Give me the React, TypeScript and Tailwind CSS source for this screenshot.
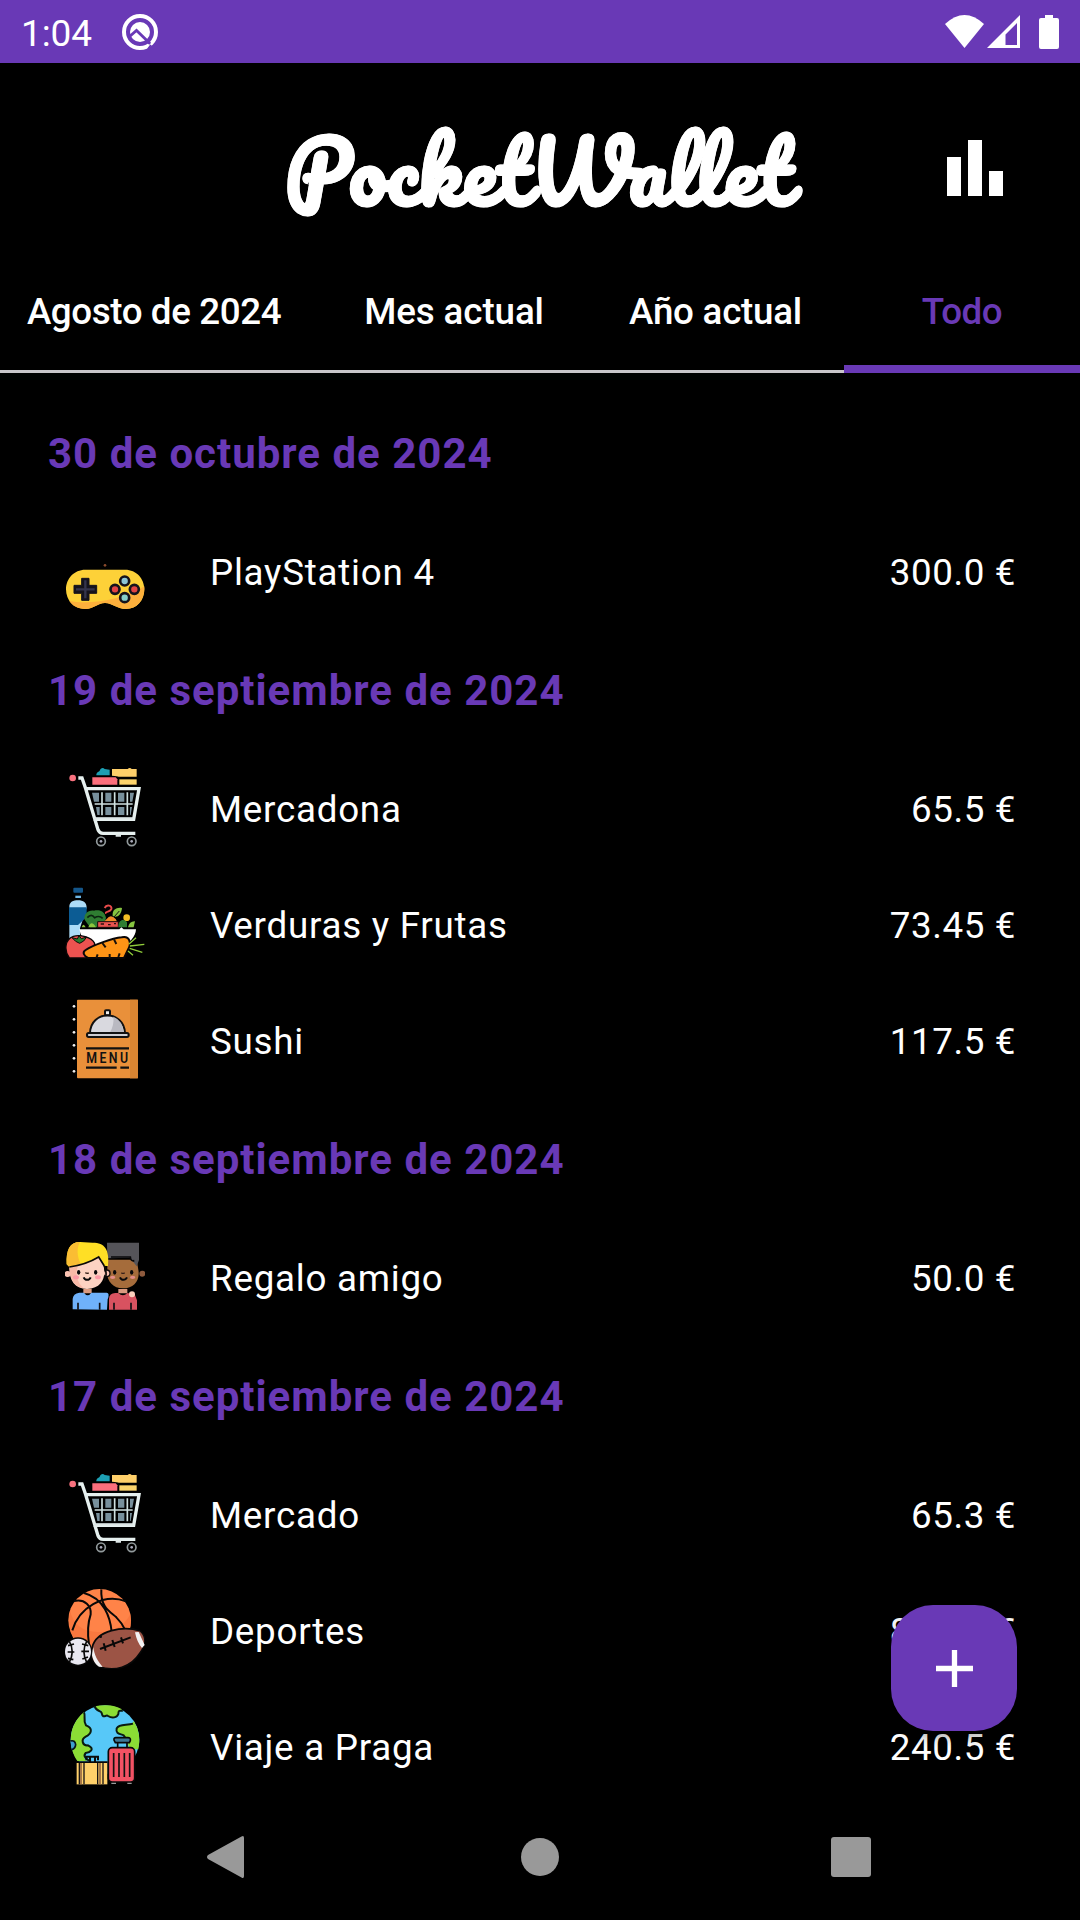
import React from "react";

type IconName = "gamepad" | "cart" | "veggies" | "menu" | "friends" | "sports" | "travel";

const ICON_VIEW: Record<IconName, string> = {
  gamepad: "75 -29 240 240",
  cart: "44 51 240 240",
  veggies: "45 24 240 240",
  menu: "45 372 240 240",
  friends: "45 19 240 240",
  sports: "45 27 240 240",
  travel: "45 375 240 240",
};

function Gamepad() {
  return (
    <>
      <circle cx="195" cy="77" r="4" fill="#8a4a2c" />
      <path d="M136 90H255C290 90 313 117 313 149C313 183 290 208 258 208C230 208 218 190 195 190C172 190 162 208 136 208C102 208 78 183 78 149C78 117 102 90 136 90Z" fill="#fdd138" />
      <path d="M313 140C316 180 292 208 258 208C230 208 218 190 195 190C172 190 162 208 136 208C112 208 96 197 88 184C150 196 250 180 313 140Z" fill="#fdb03c" />
      <path d="M125 116H147V137H170V161H147V182H125V161H102V137H125Z" fill="#15131c" stroke="#15131c" strokeWidth="3" strokeLinejoin="round" />
      <path d="M136 122V176M108 149H164" stroke="#34344c" strokeWidth="7" />
      <g stroke="#15131c" strokeWidth="8">
        <circle cx="254" cy="124" r="13.500" fill="#8cc5d6" />
        <circle cx="254" cy="174" r="13.500" fill="#86cfc9" />
        <circle cx="225" cy="149" r="13.500" fill="#e04343" />
        <circle cx="283" cy="149" r="13.500" fill="#e04343" />
      </g>
    </>
  );
}

function Cart() {
  return (
    <>
      <path d="M138 76C138 66 145 66 148 62C151 52 159 52 163 57L178 59V76Z" fill="#1d9fb3" />
      <path d="M185 57H232Q238 51 244 57H259V80H205Q202 78 185 77Z" fill="#ffd06a" />
      <rect x="207" y="88" width="52" height="16" fill="#fbd36b" />
      <path d="M126 82H196L201 88V104H126Z" fill="#fb6f7c" />
      <circle cx="67" cy="84" r="10" fill="#f9727f" />
      <g fill="#78909c">
        <path d="M125 128H146V155H131ZM165 128H183V155H165ZM203 128H222V155H203ZM239 128H251L246 155H239Z" />
        <path d="M137 171H148V195H141ZM165 171H183V195H165ZM203 171H222V195H203ZM239 171H245L241 195H239Z" />
      </g>
      <path d="M155 127V196M193 127V196M231 127V196M133 162H247" stroke="#cfe0e0" strokeWidth="5" fill="none" />
      <path d="M84 84H95L106 116H266L250 208H129M106 116L143 239Q147 250 158 250H255" stroke="#e6f0ef" strokeWidth="10" fill="none" />
      <path d="M132 205H248M196 257H212" stroke="#dde6e6" strokeWidth="7" />
      <g stroke="#929a9c" strokeWidth="5" fill="none">
        <circle cx="152" cy="274" r="13" />
        <circle cx="244" cy="274" r="13" />
      </g>
      <circle cx="152" cy="274" r="4" fill="#aab" />
      <circle cx="244" cy="274" r="4" fill="#aab" />
    </>
  );
}

function Veggies() {
  return (
    <>
      <rect x="70" y="38" width="29" height="15" rx="3" fill="#14568a" />
      <path d="M76 62H93V69H76Z" fill="#6fb6e4" />
      <path d="M58 96C58 80 70 76 84 76C100 76 110 82 110 98L90 160V190H58Z" fill="#acdcf8" />
      <path d="M57 97H110V126L84 150H57Z" fill="#0c5c94" />
      <path d="M104 134C100 118 115 104 132 107C145 103 162 108 166 122C175 138 150 144 142 157H120Z" fill="#2f7d32" />
      <path d="M112 128Q124 114 134 128Q148 120 158 130" stroke="#0b2410" strokeWidth="5" fill="none" />
      <path d="M115 157Q124 132 138 157M95 157Q100 142 107 157" fill="#8dc63f" />
      <path d="M164 99C170 87 187 91 184 102C181 112 165 108 168 116" stroke="#e94b4b" strokeWidth="6" fill="none" />
      <path d="M188 122C186 104 200 96 216 99C214 119 202 129 190 124Z" fill="#86c440" />
      <path d="M192 126L208 108" stroke="#111" strokeWidth="3" />
      <path d="M170 132Q182 116 197 132L202 142H160Z" fill="#f38a2a" />
      <circle cx="230" cy="128" r="10" fill="#f4bd25" />
      <path d="M143 140H205V157H143Z" fill="#e9534f" stroke="#170a0a" strokeWidth="3" />
      <path d="M152 147H162M174 149H182M192 146H198" stroke="#281010" strokeWidth="4" />
      <path d="M205 157C204 134 222 129 231 142V157Z" fill="#2f7d32" />
      <path d="M234 157Q238 138 255 139L251 157Z" fill="#86c440" />
      <path d="M88 163H208L214 157L221 163H258C257 184 240 207 210 214H126Q91 190 88 163Z" fill="#fff" />
      <path d="M70 184C45 193 41 225 58 249H127L134 205C124 186 90 178 70 184Z" fill="#ed5350" stroke="#0a0606" strokeWidth="4" />
      <path d="M66 188L82 192L87 182L94 191L110 186L101 198L89 205L77 199Z" fill="#277d2e" stroke="#0a0606" strokeWidth="3" />
      <path d="M107 225C129 210 188 190 215 187C239 181 246 205 233 226L222 249H114C101 242 96 232 107 225Z" fill="#ff9416" stroke="#0a0606" strokeWidth="6" />
      <path d="M157 204L167 217M192 193L199 207M139 249L143 238M179 249V237M205 246L209 235" stroke="#17100a" strokeWidth="6" />
      <path d="M237 207L258 188M240 213L283 208M239 220L277 232M234 228L249 241" stroke="#91ce3b" strokeWidth="4" />
    </>
  );
}

function MenuCard() {
  return (
    <>
      <rect x="81" y="374" width="183" height="236" rx="3" fill="#e9903a" />
      <rect x="240" y="374" width="24" height="236" fill="#d98532" />
      <g fill="#eee">
        <circle cx="72" cy="394" r="4" /><circle cx="72" cy="433" r="4" />
        <circle cx="72" cy="472" r="4" /><circle cx="72" cy="511" r="4" />
        <circle cx="72" cy="550" r="4" /><circle cx="72" cy="589" r="4" />
      </g>
      <rect x="165" y="406" width="15" height="15" rx="3" fill="#eee" stroke="#111" strokeWidth="6" />
      <path d="M120 475C121 404 223 404 225 475Z" fill="#d9d9df" stroke="#111" strokeWidth="6" />
      <path d="M190 425Q219 437 220 472H180Q193 449 190 425Z" fill="#b9b9c1" />
      <rect x="111" y="474" width="125" height="12" rx="5" fill="#cdcdd2" stroke="#111" strokeWidth="6" />
      <path d="M108 520H237M108 578H200M211 578H237" stroke="#111" strokeWidth="7" />
      <g transform="translate(109 564) scale(0.88 1)">
        <text fontSize="42" fontFamily="Roboto" fontWeight="600" textLength="142" lengthAdjust="spacing" fill="#111">MENU</text>
      </g>
    </>
  );
}

function Friends() {
  return (
    <>
      <circle cx="277" cy="132" r="9" fill="#8e5a3d" />
      <path d="M172 90H260L265 120C271 151 252 176 219 176C187 176 167 150 172 120Z" fill="#a56c3b" />
      <path d="M171 39H267V91L260 110L240 84L172 86Z" fill="#555459" />
      <path d="M183 82H241Q242 96 253 93" stroke="#09090b" strokeWidth="5" fill="none" />
      <circle cx="53" cy="133" r="9" fill="#fbc3b2" />
      <circle cx="170" cy="131" r="10" fill="#fbc3b2" stroke="#0b0909" strokeWidth="4" />
      <path d="M58 104C88 108 130 82 151 84C171 118 171 175 111 178C66 176 58 145 58 104Z" fill="#fdd2c2" />
      <path d="M58 104C64 108 77 108 86 104C72 135 84 161 101 176C68 171 57 142 58 104Z" fill="#f8b9a7" />
      <path d="M50 104C48 61 59 37 90 37L128 39C165 39 179 60 174 109H161L146 82Q117 105 58 112Z" fill="#ffdf25" />
      <path d="M50 104C48 61 59 37 90 37C75 63 87 95 94 105L58 112Z" fill="#fabd33" />
      <path d="M58 112Q108 105 146 82L163 109M164 109Q173 139 163 154" stroke="#090909" strokeWidth="5" fill="none" />
      <path d="M100 178H125V191H100ZM205 178H232V191H205Z" fill="#db9a80" />
      <path d="M68 239V208Q69 192 88 189H102Q113 205 124 189H170Q180 190 173 209L171 240Z" fill="#6fb1fa" />
      <path d="M177 240V207Q178 191 196 190H205Q219 204 232 190L254 194L261 212V240Z" fill="#d85260" />
      <circle cx="246" cy="194" r="9" fill="#fad0bd" />
      <path d="M84 219V240M149 219V240M192 219V240M243 219V240" stroke="#101014" strokeWidth="5" />
      <g fill="#09090b">
        <ellipse cx="86" cy="128" rx="5" ry="7" /><ellipse cx="137" cy="128" rx="5" ry="7" />
        <ellipse cx="194" cy="128" rx="5" ry="7" /><ellipse cx="245" cy="128" rx="5" ry="7" />
      </g>
      <path d="M106 129Q112 133 116 129M214 129Q219 133 224 129" stroke="#372019" strokeWidth="4" fill="none" />
      <path d="M101 143C105 153 118 153 122 143M210 143C214 153 226 153 231 143" stroke="#09090b" strokeWidth="6" fill="none" />
      <g fill="#fc9aa6">
        <ellipse cx="78" cy="143" rx="9" ry="6" /><ellipse cx="144" cy="143" rx="9" ry="6" />
        <ellipse cx="188" cy="143" rx="8" ry="5" opacity=".7" /><ellipse cx="248" cy="143" rx="8" ry="5" opacity=".7" />
      </g>
    </>
  );
}

function Sports() {
  return (
    <>
      <circle cx="149" cy="121" r="94" fill="#ff8348" />
      <path d="M60 91Q75 163 160 155Q215 151 241 103Q252 183 185 209H100Q47 170 60 91Z" fill="#f9783f" />
      <path d="M72 63C105 55 125 79 122 103C113 130 112 160 117 193M67 151C88 83 159 39 228 64M102 39C162 55 181 112 185 156M154 28C151 84 182 96 199 112Q216 129 225 149" stroke="#080808" strokeWidth="6" fill="none" />
      <path d="M127 201C139 151 220 136 271 153C293 174 286 196 270 219C243 262 194 276 147 260C126 249 119 228 127 201Z" fill="#9c5445" stroke="#080808" strokeWidth="5" />
      <path d="M130 202C133 226 142 242 158 261L147 260C136 254 130 243 125 222ZM255 157L266 156L284 195L276 204Q261 188 255 157Z" fill="#f3f2f3" />
      <path d="M150 207L242 172M161 190L167 212M187 180L194 201M213 172L219 190" stroke="#080808" strokeWidth="6" />
      <circle cx="152" cy="170" r="4" fill="#080808" />
      <circle cx="84" cy="215" r="43" fill="#080808" />
      <circle cx="84" cy="215" r="39" fill="#e9e8f1" />
      <path d="M58 184Q75 214 58 247M110 184Q94 214 110 247M54 197L72 192M53 216H73M54 235L70 239M96 192L115 197M94 214H117M97 237L114 231" stroke="#080808" strokeWidth="5" fill="none" />
    </>
  );
}

function Travel() {
  return (
    <>
      <circle cx="165" cy="479" r="103" fill="#57c8f8" />
      <path d="M135 379Q140 396 153 390C159 414 168 402 174 408C187 416 201 413 205 402C205 391 210 394 216 388Q190 374 165 376Q148 376 135 379Z" fill="#8bdd35" />
      <path d="M102 396Q62 430 62 482Q65 520 82 543H112C94 535 103 519 117 516C131 507 117 493 103 495C91 484 106 473 118 466C129 455 121 440 107 437C98 421 105 410 102 396Z" fill="#8bdd35" />
      <path d="M252 424Q242 437 214 436C195 439 195 462 214 461C225 462 223 477 231 483L239 508H265Q275 462 252 424Z" fill="#8bdd35" />
      <path d="M134 378C138 397 153 390 155 399C159 419 168 402 174 408C187 416 201 413 205 402C205 386 214 396 218 391M102 397C108 409 98 421 108 436C130 444 125 461 107 470C91 479 98 498 114 496C137 507 119 518 107 519C98 528 109 540 123 543M249 431C230 437 207 431 200 445C196 463 212 461 221 466Q229 475 227 485" stroke="#0b1b11" strokeWidth="6" fill="none" />
      <path d="M61 483Q75 479 77 494Q76 506 65 509" fill="#3d9ece" stroke="#06151b" strokeWidth="5" />
      <path d="M109 541V530H144V541M120 530V546M135 530V546" stroke="#0c0c0c" strokeWidth="6" fill="none" />
      <path d="M77 544H173V616H77Z" fill="#080808" />
      <rect x="80" y="549" width="92" height="64" fill="#ffd06a" />
      <path d="M93 549V613M150 549V613" stroke="#a87948" strokeWidth="6" />
      <path d="M88 549V613M102 549V613M143 549V613M159 549V613" stroke="#171313" strokeWidth="4" />
      <path d="M192 480Q191 472 199 473H232Q243 472 241 482L238 488H196ZM203 488V505M231 488V505" fill="#3d7896" stroke="#080808" strokeWidth="5" />
      <rect x="175" y="503" width="79" height="103" rx="12" fill="#f25264" stroke="#080808" strokeWidth="5" />
      <path d="M191 519V591M207 519V591M223 519V591M239 519V591" stroke="#111" strokeWidth="5" />
      <path d="M184 610H198M232 610H245" stroke="#999" strokeWidth="4" />
    </>
  );
}

const ICONS: Record<IconName, () => React.ReactElement> = {
  gamepad: Gamepad,
  cart: Cart,
  veggies: Veggies,
  menu: MenuCard,
  friends: Friends,
  sports: Sports,
  travel: Travel,
};

const GROUPS: { date: string; items: { icon: IconName; name: string; price: string }[] }[] = [
  { date: "30 de octubre de 2024", items: [{ icon: "gamepad", name: "PlayStation 4", price: "300.0 €" }] },
  {
    date: "19 de septiembre de 2024",
    items: [
      { icon: "cart", name: "Mercadona", price: "65.5 €" },
      { icon: "veggies", name: "Verduras y Frutas", price: "73.45 €" },
      { icon: "menu", name: "Sushi", price: "117.5 €" },
    ],
  },
  { date: "18 de septiembre de 2024", items: [{ icon: "friends", name: "Regalo amigo", price: "50.0 €" }] },
  {
    date: "17 de septiembre de 2024",
    items: [
      { icon: "cart", name: "Mercado", price: "65.3 €" },
      { icon: "sports", name: "Deportes", price: "85.99 €" },
      { icon: "travel", name: "Viaje a Praga", price: "240.5 €" },
    ],
  },
];

function StatusBar() {
  return (
    <header className="flex h-[63px] shrink-0 items-center justify-between bg-[#6939b6] pl-[21px] pr-[21px]">
      <div className="flex items-center gap-[30px]">
        <span className="pt-[3px] text-[37px] leading-none tracking-[-0.1px]">1:04</span>
        <svg className="h-9 w-9" viewBox="0 0 36 36" fill="none">
          <circle cx="18" cy="18" r="16" stroke="#fff" strokeWidth="4" />
          <circle cx="18" cy="18" r="10" fill="#fff" />
          <path d="M7 23L14.500 16.500L28 29.500" stroke="#6939b6" strokeWidth="2.800" />
          <path d="M24.500 26.500L28 30M29 31L26 35" stroke="#6939b6" strokeWidth="2" />
        </svg>
      </div>
      <svg className="h-9 w-[114px]" viewBox="945 13 114 36" fill="#fff">
        <path d="M945 23Q964.500 5 984 23L964.500 47Z" />
        <path fillRule="evenodd" d="M1020 14V47H987ZM1017 22L1005.500 33.500V44H1017Z" />
        <path d="M1045 14H1053V17H1057Q1059 17 1059 19V46Q1059 48 1057 48H1041Q1039 48 1039 46V19Q1039 17 1041 17H1045Z" />
      </svg>
    </header>
  );
}

function TopBar() {
  return (
    <div className="flex h-[210px] shrink-0 items-start justify-between pl-[285px] pr-[77px] pt-[48px]">
      <h1 className="mt-[2px] whitespace-nowrap font-['Pacifico',cursive] text-[83px] font-bold leading-[117px] tracking-[0.9px] [-webkit-text-stroke:0.5px_white]">
        PocketWallet
      </h1>
      <div className="mt-[29px] flex h-14 items-end gap-[7px]">
        <div className="h-[39px] w-3.5 bg-white" />
        <div className="h-14 w-3.5 bg-white" />
        <div className="h-[25px] w-3.5 bg-white" />
      </div>
    </div>
  );
}

function Tabs() {
  const tab = "flex h-full shrink-0 justify-center pt-[17px]";
  return (
    <nav className="flex h-[100px] shrink-0 overflow-hidden text-[36.75px] font-medium leading-[44px]">
      <div className={`${tab} -ml-[13px] w-[334px] border-b-[3px] border-[#c9c5ca] tracking-[-0.4px]`}>Agosto de 2024</div>
      <div className={`${tab} w-[266px] border-b-[3px] border-[#c9c5ca] tracking-[-0.1px]`}>Mes actual</div>
      <div className={`${tab} w-[257px] border-b-[3px] border-[#c9c5ca] tracking-[-0.25px]`}>Año actual</div>
      <div className={`${tab} w-[236px] border-b-[8px] border-[#6939b6] tracking-[-0.5px] text-[#6939b6]`}>Todo</div>
    </nav>
  );
}

export default function App() {
  return (
    <div className="relative flex h-[1920px] w-[1080px] flex-col overflow-hidden bg-black font-['Roboto',sans-serif] text-white">
      <StatusBar />
      <TopBar />
      <Tabs />
      <main className="min-h-0 flex-1 overflow-hidden pt-[18px]">
        {GROUPS.map((group) => (
          <section key={group.date}>
            <h2 className="flex h-[121px] items-center pl-12 pt-[3px] text-[42px] font-bold tracking-[1px] text-[#6939b6]">{group.date}</h2>
            {group.items.map((item) => {
              const Drawing = ICONS[item.icon];
              return (
                <div key={item.name} className="flex h-[116px] items-center pl-[65px] pr-[64px]">
                  <svg className="h-20 w-20 shrink-0" viewBox={ICON_VIEW[item.icon]}>
                    <Drawing />
                  </svg>
                  <span className="ml-[65px] flex-1 pt-[6px] text-[36.75px] tracking-[0.75px]">{item.name}</span>
                  <span className="pt-[6px] text-[36.75px] tracking-[0.6px]">{item.price}</span>
                </div>
              );
            })}
          </section>
        ))}
      </main>
      <footer className="flex h-[126px] shrink-0 items-center bg-black">
        <svg className="ml-[206px] h-[44px] w-[39px]" viewBox="0 0 39 44" fill="#999">
          <path d="M35.500 1.500Q38 0 38 3V41Q38 44 35.500 42.500L2 24Q0 22 2 20Z" />
        </svg>
        <div className="ml-[276px] h-[38px] w-[38px] rounded-full bg-[#999]" />
        <div className="ml-[272px] h-10 w-10 rounded-[3px] bg-[#999]" />
      </footer>
      <button className="absolute left-[891px] top-[1605px] flex h-[126px] w-[126px] items-center justify-center rounded-[42px] bg-[#6939b6] shadow-[0_6px_14px_rgba(0,0,0,0.35)]" aria-label="Añadir">
        <svg className="h-[37px] w-[37px]" viewBox="0 0 37 37">
          <path d="M18.500 0V37M0 18.500H37" stroke="#fff" strokeWidth="5.3" />
        </svg>
      </button>
    </div>
  );
}
